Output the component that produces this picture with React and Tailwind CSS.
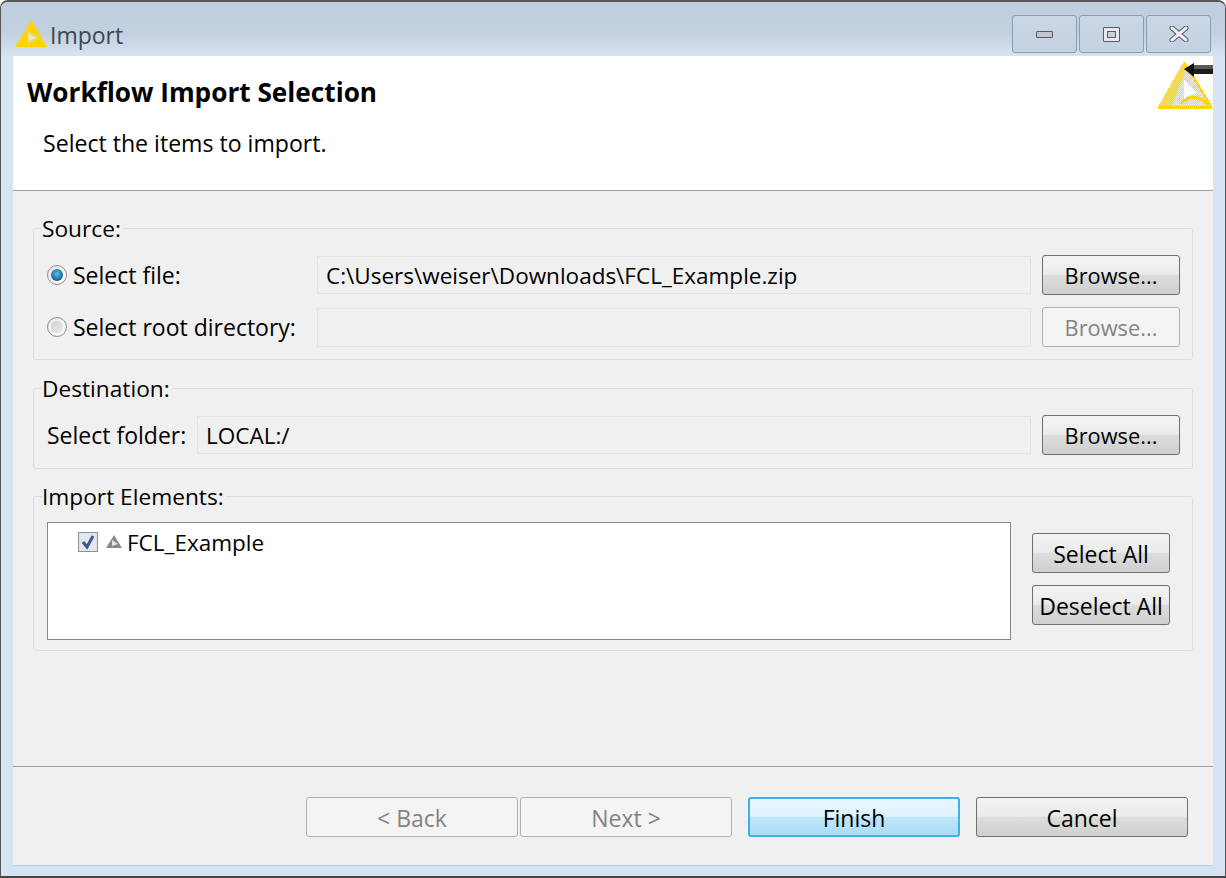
import React from 'react';

const FONT = "font-['Open_Sans','Noto_Sans',sans-serif]";

function Btn({ children, className = '', disabled, focus }) {
  let look = 'border-[#707070] bg-[linear-gradient(#f3f3f3_0%,#ebebeb_48%,#dddddd_50%,#cfcfcf_100%)] text-black';
  if (disabled) look = 'border-[#adb2b5] bg-[#f4f4f4] text-[#838383]';
  if (focus) look = 'border-[#3cb0e8] border-2 bg-[linear-gradient(#e8f6fe_0%,#dff3fe_48%,#bfe6fb_50%,#a9dcf7_100%)] text-black';
  return (
    <button className={`flex items-center justify-center border rounded-[3px] pt-[2px] text-[23px] leading-none ${look} ${className}`}>
      {children}
    </button>
  );
}

function Group({ label, className = '', children }) {
  return (
    <fieldset className={`border border-[#d5dfe5] rounded-[3px] mx-[20px] ${className}`}>
      <legend className="ml-[8px] pr-[2px] pt-[1px] text-[22.7px] leading-[29px] text-black">{label}</legend>
      {children}
    </fieldset>
  );
}

function Field({ value, className = '' }) {
  return (
    <div className={`h-[38px] flex items-center pl-[8px] pt-[1px] border border-[#e3e3e3] bg-[#f0f0f0] text-[22.5px] text-black ${className}`}>
      {value}
    </div>
  );
}

function Radio({ checked }) {
  return (
    <span className="w-[20px] h-[20px] rounded-full border border-[#8e8f8f] bg-[linear-gradient(135deg,#e8e8e8,#fbfbfb)] flex items-center justify-center shrink-0">
      {checked ? (
        <span className="w-[12px] h-[12px] rounded-full bg-[radial-gradient(circle_at_50%_40%,#5bc0e8,#0c5f8c_75%)]" />
      ) : (
        <span className="w-[12px] h-[12px] rounded-full bg-[linear-gradient(135deg,#cfcfcf,#ececec)]" />
      )}
    </span>
  );
}

function TitleIcon() {
  return (
    <svg width="33" height="28" viewBox="0 0 33 28" className="shrink-0">
      <path d="M16.5 0 L32 27 L0 27 Z" fill="#ffd400" />
      <path d="M12 10 L25 18 L13 24 Z" fill="#e2d67e" />
      <path d="M13 13 L21 18 L14 21 Z" fill="#efeab8" />
    </svg>
  );
}

function BannerIcon() {
  return (
    <svg width="56" height="50" viewBox="0 0 56 50" shapeRendering="crispEdges">
      <defs>
        <pattern id="dots" width="2" height="2" patternUnits="userSpaceOnUse">
          <rect width="1" height="1" fill="#ffd400" />
          <rect x="1" y="1" width="1" height="1" fill="#ffd400" />
        </pattern>
      </defs>
      {/* dithered body, solid ribs on top */}
      <path d="M27 1 L55 47 L1 47 Z" fill="url(#dots)" />
      <path d="M27 1 L29 10 L14 47 L1 47 Z" fill="#ffd400" fillOpacity="0.6" />
      <path d="M27 20 C33 26 37 30 41 33 C36 34 31 36 27 38 Z" fill="#ffffff" />
      <path d="M27 2 L54 46" stroke="#ffd400" strokeWidth="2" fill="none" />
      <path d="M24 43 C32 36 42 35 52 45" stroke="#ffd400" strokeWidth="3" fill="none" />
      <path d="M1 47 L55 47" stroke="#ffd400" strokeWidth="3" />
      <rect x="36" y="5" width="20" height="4" fill="#5a5a5a" />
      <rect x="36" y="9" width="20" height="5" fill="#1c1c1c" />
      <path d="M27 9 L37 3 L37 17 Z" fill="#111111" shapeRendering="auto" />
    </svg>
  );
}

function WinBtn({ children }) {
  return (
    <div className="w-[65px] h-[38px] flex items-center justify-center border border-[#8c9ab3] rounded-[3px] bg-[linear-gradient(#c9d6e5,#c3d1e0)]">
      {children}
    </div>
  );
}

export default function App() {
  return (
    <div className={`w-[1226px] h-[878px] flex flex-col overflow-hidden rounded-t-[8px] border-x border-x-[#555] border-t-2 border-t-[#555] border-b-2 border-b-[#444] bg-[#d6e4f2] ${FONT}`}>
      {/* title bar */}
      <div className="h-[54px] flex items-start pl-[14px] pr-[14px] bg-[linear-gradient(#bfcedd_0%,#c2d0df_60%,#d6e4f2_100%)]">
        <div className="flex items-start gap-[2px] mt-[18px]">
          <TitleIcon />
          <span className="text-[23px] leading-[28px] mt-[1px] text-[#3f4650]">Import</span>
        </div>
        <div className="ml-auto flex gap-[2px] mt-[13px]">
          <WinBtn>
            <span className="w-[17px] h-[7px] bg-[#c4c6cc] border border-[#555a66] rounded-[1px]" />
          </WinBtn>
          <WinBtn>
            <span className="w-[17px] h-[15px] border border-[#555a66] rounded-[1px] bg-[#e8e8ec] flex items-center justify-center">
              <span className="w-[9px] h-[7px] border border-[#555a66] bg-[#c5d2e0]" />
            </span>
          </WinBtn>
          <WinBtn>
            <svg width="20" height="16" viewBox="0 0 20 16">
              <path d="M3 2 L17 14 M17 2 L3 14" stroke="#555a66" strokeWidth="5" strokeLinecap="round" />
              <path d="M3 2 L17 14 M17 2 L3 14" stroke="#eeeef2" strokeWidth="3" strokeLinecap="round" />
            </svg>
          </WinBtn>
        </div>
      </div>

      {/* client area */}
      <div className="flex-1 mx-[12px] mb-[10px] flex flex-col bg-[#f0f0f0] border-b border-b-[#bcd0e4]">
        <div className="h-[135px] bg-white border-b border-b-[#a0a0a0] flex justify-between">
          <div>
            <div className="pl-[14px] pt-[19px] text-[26.2px] leading-[34px] font-bold text-black">Workflow Import Selection</div>
            <div className="pl-[30px] pt-[19px] text-[23.1px] leading-[30px] text-black">Select the items to import.</div>
          </div>
          <div className="pt-[4px]">
            <BannerIcon />
          </div>
        </div>

        <div className="flex-1 flex flex-col pt-[22px]">
          <Group label="Source:">
            <div className="flex items-center h-[40px] mt-[12px] pl-[13px]">
              <Radio checked />
              <span className="ml-[6px] w-[244px] pt-[1px] text-[23px] text-black">Select file:</span>
              <Field value="C:\Users\weiser\Downloads\FCL_Example.zip" className="w-[714px]" />
              <Btn className="w-[138px] h-[40px] ml-[11px] !text-[21.8px]">Browse...</Btn>
            </div>
            <div className="flex items-center h-[40px] mt-[12px] mb-[12px] pl-[13px]">
              <Radio />
              <span className="ml-[6px] w-[244px] pt-[1px] text-[23px] text-black whitespace-nowrap">Select root directory:</span>
              <Field value="" className="w-[714px] h-[39px] border-[#c8c8c8]" />
              <Btn disabled className="w-[138px] h-[40px] ml-[11px] !text-[21.8px]">Browse...</Btn>
            </div>
          </Group>

          <Group label="Destination:" className="mt-[13px]">
            <div className="flex items-center h-[40px] mt-[12px] mb-[13px] pl-[13px]">
              <span className="w-[150px] pt-[1px] text-[23px] text-black whitespace-nowrap">Select folder:</span>
              <Field value="LOCAL:/" className="w-[834px]" />
              <Btn className="w-[138px] h-[40px] ml-[11px] !text-[21.8px]">Browse...</Btn>
            </div>
          </Group>

          <Group label="Import Elements:" className="mt-[12px]">
            <div className="flex mt-[11px] mb-[10px] pl-[13px]">
              <div className="w-[964px] h-[118px] bg-white border border-[#82878f] flex items-start pl-[30px] pt-[8px]">
                <span className="w-[20px] h-[20px] border border-[#8e8f8f] bg-[#e4e6ee] flex items-center justify-center shrink-0 mt-[1px]">
                  <svg width="16" height="16" viewBox="0 0 16 16">
                    <path d="M3 8 L7 13 L13 2" stroke="#3f5596" strokeWidth="3" fill="none" />
                  </svg>
                </span>
                <svg width="16" height="14" viewBox="0 0 16 14" className="ml-[8px] mt-[4px] shrink-0">
                  <path d="M8 0 L16 13 L0 13 Z" fill="#8a8a8a" />
                  <path d="M6 5 L12 9 L6 11 Z" fill="#e6e6e6" />
                </svg>
                <span className="ml-[5px] text-[22.5px] leading-[24px] text-black">FCL_Example</span>
              </div>
              <div className="flex flex-col gap-[12px] ml-[21px] mt-[11px]">
                <Btn className="w-[138px] h-[40px]">Select All</Btn>
                <Btn className="w-[138px] h-[40px]">Deselect All</Btn>
              </div>
            </div>
          </Group>
        </div>

        <div className="h-[99px] border-t border-t-[#a0a0a0] flex items-start justify-end pr-[25px] pt-[30px]">
          <Btn disabled className="w-[212px] h-[40px]">{'< Back'}</Btn>
          <Btn disabled className="w-[212px] h-[40px] ml-[2px]">{'Next >'}</Btn>
          <Btn focus className="w-[212px] h-[40px] ml-[16px]">Finish</Btn>
          <Btn className="w-[212px] h-[40px] ml-[16px]">Cancel</Btn>
        </div>
      </div>
    </div>
  );
}
